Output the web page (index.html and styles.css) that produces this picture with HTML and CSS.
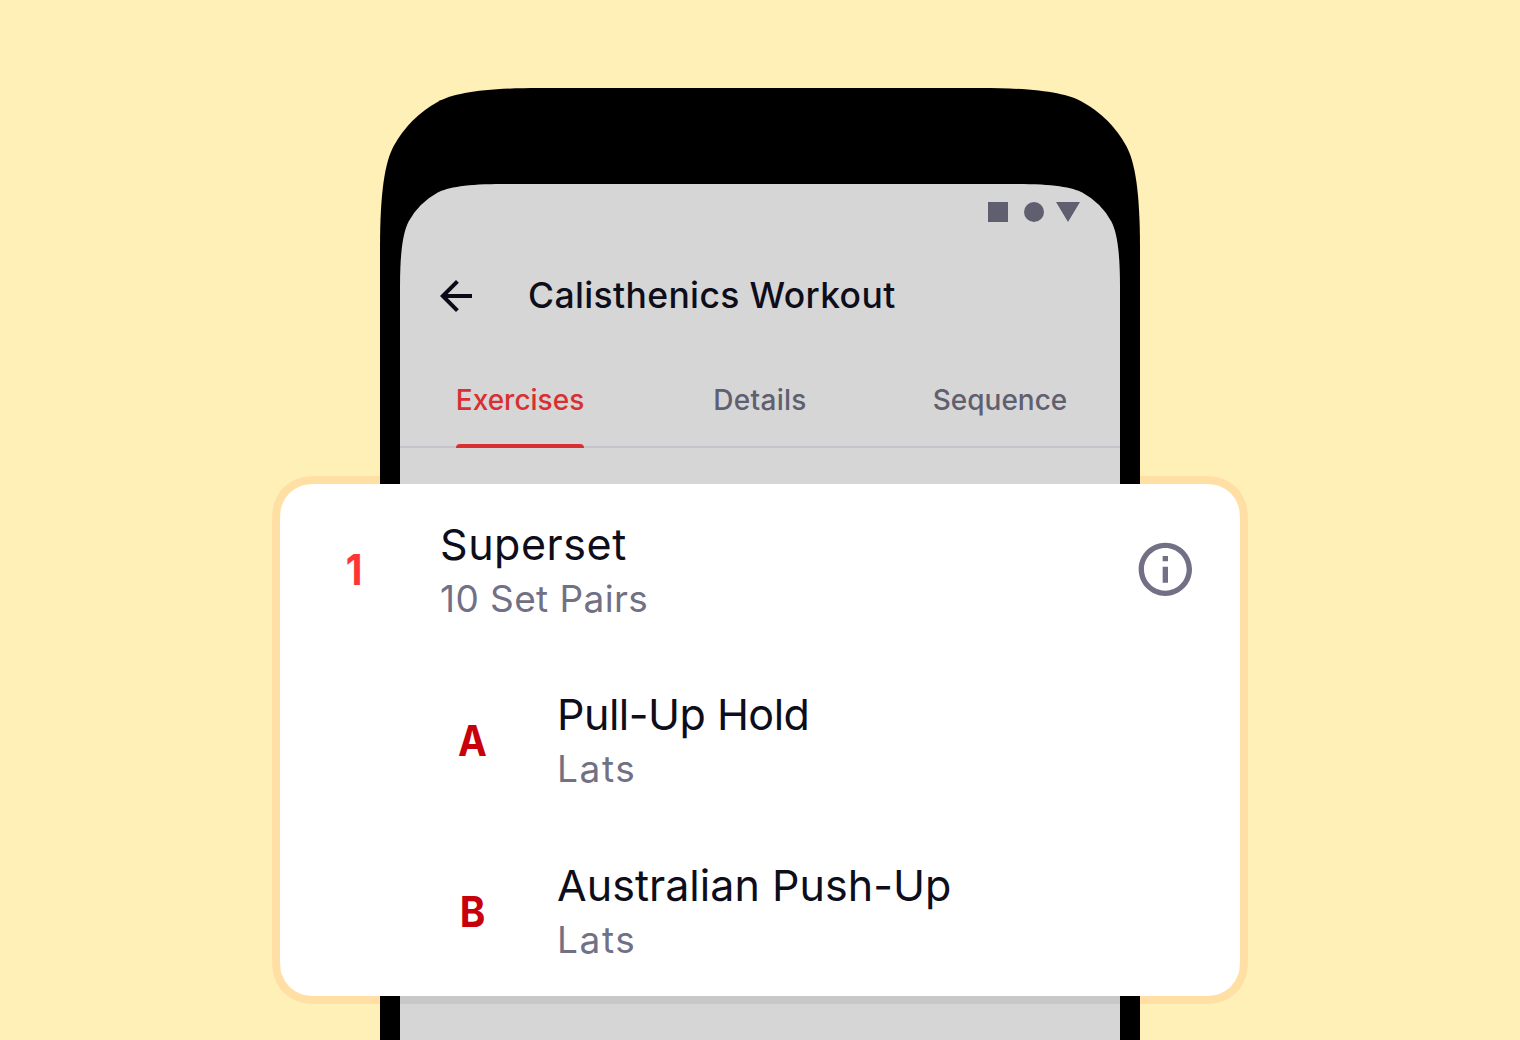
FILE: index.html
```html
<!DOCTYPE html>
<html lang="en">
<head>
<meta charset="utf-8">
<title>Calisthenics Workout</title>
<link rel="stylesheet" href="styles.css">
</head>
<body>
<main class="stage">
  <div class="halo"></div>
  <section class="phone">
    <div class="screen">
      <div class="status-bar">
        <svg class="status-icons" viewBox="0 0 92 20"><path d="M0 0h20v20H0zM68 0h24L80 20z"/><circle cx="46" cy="10" r="10"/></svg>
      </div>
      <header class="app-bar">
        <svg class="back" viewBox="0 0 24 24"><path d="M20 11H7.83l5.59-5.59L12 4l-8 8 8 8 1.41-1.41L7.83 13H20z"/></svg>
        <h1 class="title">Calisthenics Workout</h1>
      </header>
      <nav class="tabs">
        <div class="tab tab-active"><span class="tab-label">Exercises</span></div>
        <div class="tab"><span class="tab-label label-details">Details</span></div>
        <div class="tab"><span class="tab-label">Sequence</span></div>
      </nav>
      <div class="list-space"></div>
    </div>
  </section>
  <section class="card">
    <div class="row">
      <div class="marker">1</div>
      <div class="text"><div class="name name-superset">Superset</div><div class="detail detail-sets">10 Set Pairs</div></div>
      <svg class="info" viewBox="-0.12 -0.12 24 24"><path d="M11 7h2v2h-2zm0 4h2v6h-2zm1-9C6.48 2 2 6.48 2 12s4.48 10 10 10 10-4.48 10-10S17.52 2 12 2zm0 18c-4.41 0-8-3.59-8-8s3.59-8 8-8 8 3.59 8 8-3.59 8-8 8z"/></svg>
    </div>
    <div class="row row-nested">
      <div class="marker">A</div>
      <div class="text"><div class="name name-pull">Pull-Up Hold</div><div class="detail detail-muscle">Lats</div></div>
    </div>
    <div class="row row-nested">
      <div class="marker">B</div>
      <div class="text"><div class="name name-push">Australian Push-Up</div><div class="detail detail-muscle">Lats</div></div>
    </div>
  </section>
</main>
</body>
</html>
```
FILE: styles.css
```css
* { box-sizing: border-box; }
body {
  margin: 0;
  background: #fff0b8;
  color: #0e0d1a;
  font-family: Inter, "Liberation Sans", sans-serif;
}
.stage {
  display: grid;
  width: 1520px;
  height: 1040px;
  overflow: hidden;
}
.stage > * { grid-area: 1 / 1; }
.halo {
  width: 976px;
  height: 528px;
  margin: 476px 0 0 272px;
  background: #ffdfa3;
  clip-path: path("M0 57C0 41 0 33 2.3 26.8A40 40 0 0 1 26.8 2.3C33 0 41 0 57 0H919C935 0 943 0 949.2 2.3A40 40 0 0 1 973.7 26.8C976 33 976 41 976 57V471C976 487 976 495 973.7 501.2A40 40 0 0 1 949.2 525.7C943 528 935 528 919 528H57C41 528 33 528 26.8 525.7A40 40 0 0 1 2.3 501.2C0 495 0 487 0 471Z");
}
.phone {
  width: 760px;
  height: 952px;
  margin: 88px 0 0 380px;
  padding: 96px 20px 0;
  background: #000;
  clip-path: path("M0 160C0 104 5 74 13.7 58A112 112 0 0 1 58 13.7C74 5 104 0 160 0H600C656 0 686 5 702 13.7A112 112 0 0 1 746.3 58C755 74 760 104 760 160V952H0Z");
}
.screen {
  height: 856px;
  background: #d6d6d6;
  clip-path: path("M0 102.9C0 66.9 3.2 47.6 8.8 37.3A72 72 0 0 1 37.3 8.8C47.6 3.2 66.9 0 102.9 0H617.1C653.1 0 672.4 3.2 682.7 8.8A72 72 0 0 1 711.2 37.3C716.8 47.6 720 66.9 720 102.9V856H0Z");
}
.status-bar {
  display: flex;
  justify-content: flex-end;
  align-items: center;
  height: 56px;
  padding-right: 40px;
}
.status-icons { width: 92px; height: 20px; fill: #605f70; }
.app-bar {
  display: flex;
  align-items: center;
  gap: 48px;
  height: 112px;
  padding-left: 32px;
}
.back { width: 48px; height: 48px; fill: #0b0a16; }
.title {
  margin: 0;
  font-size: 35.5px;
  font-weight: 500;
  letter-spacing: 0.36px;
  line-height: 46px;
  white-space: nowrap;
}
.tabs {
  display: grid;
  grid-template-columns: repeat(3, 240px);
  height: 96px;
  border-bottom: 2px solid #c5c4cb;
}
.tab {
  display: flex;
  justify-content: center;
  height: 96px;
  color: #605f70;
  font-size: 28px;
  font-weight: 500;
  line-height: 96px;
}
.label-details { letter-spacing: 0.3px; }
.tab-active {
  flex-direction: column;
  align-items: center;
  color: #d92f30;
}
.tab-active .tab-label { height: 92px; }
.tab-active::after {
  content: "";
  width: 128px;
  height: 4px;
  border-radius: 4px 4px 0 0;
  background: #d92f30;
}
.list-space { height: 556px; border-bottom: 8px solid #c8c8c8; }
.card {
  display: grid;
  grid-template-rows: repeat(3, 1fr);
  width: 960px;
  height: 512px;
  margin: 484px 0 0 280px;
  background: #fff;
  clip-path: path("M0 46C0 33 0 26.6 1.8 21.4A32 32 0 0 1 21.4 1.8C26.6 0 33 0 46 0H914C927 0 933.4 0 938.6 1.8A32 32 0 0 1 958.2 21.4C960 26.6 960 33 960 46V466C960 479 960 485.4 958.2 490.6A32 32 0 0 1 938.6 510.2C933.4 512 927 512 914 512H46C33 512 26.6 512 21.4 510.2A32 32 0 0 1 1.8 490.6C0 485.4 0 479 0 466Z");
}
.row {
  display: grid;
  grid-template-columns: 74px 1fr 64px;
  column-gap: 49px;
  align-items: center;
  padding: 0 43px 0 37px;
}
.row-nested {
  grid-template-columns: 75px 1fr;
  column-gap: 47px;
  padding-left: 155px;
}
.marker {
  color: #ff3434;
  font-size: 43px;
  font-weight: 700;
  text-align: center;
  transform: scaleX(0.9);
}
.row-nested .marker { color: #c7000b; }
.text { padding-top: 5px; white-space: nowrap; }
.name { font-size: 43px; line-height: 54px; }
.name-superset { letter-spacing: 0.55px; }
.name-pull { letter-spacing: -0.5px; }
.name-push { letter-spacing: 0.03px; }
.detail { color: #717085; font-size: 37px; line-height: 56px; }
.detail-sets { letter-spacing: 0.4px; }
.detail-muscle { letter-spacing: 1.6px; }
.info { width: 64px; height: 64px; fill: #717085; }
```
